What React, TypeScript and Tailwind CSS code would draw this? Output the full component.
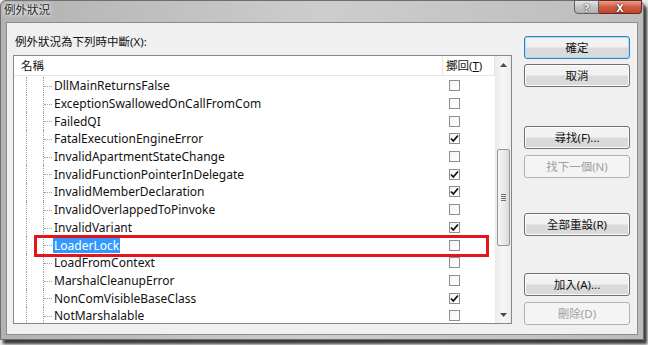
import React from "react";

const rows: [string, boolean][] = [
  ["DllMainReturnsFalse", false],
  ["ExceptionSwallowedOnCallFromCom", false],
  ["FailedQI", false],
  ["FatalExecutionEngineError", true],
  ["InvalidApartmentStateChange", false],
  ["InvalidFunctionPointerInDelegate", true],
  ["InvalidMemberDeclaration", true],
  ["InvalidOverlappedToPinvoke", false],
  ["InvalidVariant", true],
  ["LoaderLock", false],
  ["LoadFromContext", false],
  ["MarshalCleanupError", false],
  ["NonComVisibleBaseClass", true],
  ["NotMarshalable", false],
];

const FONT = { fontFamily: '"Noto Sans", "Noto Sans CJK TC", sans-serif' };

function CheckBox({ checked }: { checked: boolean }) {
  return (
    <div className="w-[11px] h-[11px] border border-[#8e8f8f] bg-gradient-to-br from-[#f4f4f4] to-white flex items-center justify-center">
      {checked && (
        <svg width="9" height="9" viewBox="0 0 9 9">
          <path d="M1 4.5 L3.3 7 L8 1.5" stroke="#111" strokeWidth="1.8" fill="none" />
        </svg>
      )}
    </div>
  );
}

function Btn({
  label,
  disabled,
  isDefault,
  className,
}: {
  label: string;
  disabled?: boolean;
  isDefault?: boolean;
  className?: string;
}) {
  const base =
    "w-[106px] h-[23px] rounded-[3px] flex items-center justify-center text-[11.5px] leading-none";
  let cls = "";
  if (disabled) {
    cls = "border border-[#adb2b5] bg-[#f4f4f4] text-[#a0a0a0]";
  } else if (isDefault) {
    cls =
      "border border-[#3c7fb1] bg-gradient-to-b from-[#f2f2f2] from-45% to-[#dadada] to-55% text-[#111] shadow-[inset_0_0_0_1px_#9ee0ff]";
  } else {
    cls =
      "border border-[#707070] bg-gradient-to-b from-[#f2f2f2] from-45% to-[#dadada] to-55% text-[#111] shadow-[inset_0_0_0_1px_#fcfcfc]";
  }
  return <div className={`${base} ${cls} ${className ?? ""}`}>{label}</div>;
}

function Row({ name, checked, selected }: { name: string; checked: boolean; selected?: boolean }) {
  return (
    <div className="h-[17.7px] flex items-stretch">
      <div className="w-[429px] flex items-center">
        <div className="relative w-[39px] self-stretch shrink-0">
          <div className="absolute left-[12px] top-0 bottom-0 border-l border-dotted border-[#a0a0a0]" />
          <div className="absolute left-[29px] top-0 bottom-0 border-l border-dotted border-[#a0a0a0]" />
          <div className="absolute left-[30px] top-[9px] w-[8px] border-t border-dotted border-[#a0a0a0]" />
        </div>
        <span
          className={`px-[1px] text-[12px] leading-[15px] whitespace-nowrap ${
            selected ? "bg-[#3399ff] text-white" : "text-[#111]"
          }`}
        >
          {name}
        </span>
      </div>
      <div className="flex-1 flex items-center pl-[6px]">
        <CheckBox checked={checked} />
      </div>
    </div>
  );
}

function ScrollBar() {
  return (
    <div className="w-[16px] flex flex-col bg-gradient-to-r from-[#ececec] via-[#f7f7f7] to-[#ececec] border-l border-[#ebebeb]">
      <div className="h-[17px] flex items-center justify-center">
        <svg width="7" height="4" viewBox="0 0 7 4">
          <path d="M0 4 L3.5 0 L7 4 Z" fill="#4a4a4a" />
        </svg>
      </div>
      <div className="flex-1 relative">
        <div className="mt-[76px] mx-[1px] h-[97px] rounded-[2px] border border-[#979797] bg-gradient-to-r from-[#f5f5f5] via-[#ebebeb] to-[#d9d9d9] flex flex-col items-center justify-center gap-[1px]">
          <div className="w-[5px] h-[1px] bg-[#707070]" />
          <div className="w-[5px] h-[1px] bg-[#707070]" />
          <div className="w-[5px] h-[1px] bg-[#707070]" />
          <div className="w-[5px] h-[1px] bg-[#707070]" />
        </div>
      </div>
      <div className="h-[17px] flex items-center justify-center">
        <svg width="7" height="4" viewBox="0 0 7 4">
          <path d="M0 0 L7 0 L3.5 4 Z" fill="#4a4a4a" />
        </svg>
      </div>
    </div>
  );
}

export default function App() {
  return (
    <div className="w-[648px] h-[345px] bg-[#e8e8e8] overflow-hidden" style={FONT}>
      <div className="w-[644px] h-[340px] flex flex-col rounded-t-[6px] border border-[#6e6e6e] bg-gradient-to-r from-[#b2b2b2] via-[#cdcdcd] to-[#bcbcbc] shadow-[3px_4px_3px_rgba(0,0,0,0.75)]">
        {/* title bar */}
        <div className="h-[21px] flex items-start justify-between">
          <div
            className="pl-[3px] pt-[1px] text-[11.5px] leading-[16px] text-[#2a2a2a]"
            style={{ textShadow: "0 0 6px #ffffff, 0 0 3px #ffffff" }}
          >
            例外狀況
          </div>
          <div className="flex mr-[1px] -mt-[1px]">
            <div className="w-[25px] h-[14px] rounded-bl-[4px] border border-[#5f5f5f] bg-gradient-to-b from-[#e6e6e6] via-[#c4c4c4] to-[#b0b0b0] flex items-center justify-center">
              <span
                className="text-[11px] font-bold leading-none text-white"
                style={{ textShadow: "0 0 2px #333, 0 0 1px #333" }}
              >
                ?
              </span>
            </div>
            <div className="w-[43px] h-[14px] rounded-br-[4px] border border-l-0 border-[#5f2a22] bg-gradient-to-b from-[#e9a08f] via-[#d05a43] to-[#c5432b] flex items-center justify-center">
              <span
                className="text-[11px] font-bold leading-none text-white"
                style={{ textShadow: "0 0 2px #3a0f08, 0 0 1px #3a0f08" }}
              >
                X
              </span>
            </div>
          </div>
        </div>
        {/* client */}
        <div className="flex-1 mx-[5px] mb-[4px] border border-[#8c8c8c] bg-[#f0f0f0] flex pl-[6px] pr-[7px]">
          <div className="w-[500px] flex flex-col pt-[11px]">
            <div className="pl-[2px] h-[16px] text-[11.5px] leading-[16px] text-[#111]">
              例外狀況為下列時中斷(X):
            </div>
            <div className="relative mt-[5px] h-[269px] border border-[#828790] bg-white flex overflow-hidden">
              <div className="flex-1 flex flex-col overflow-hidden">
                <div className="h-[20px] shrink-0 flex border-b border-[#e5e5e5] text-[11.5px] text-[#111]">
                  <div className="w-[429px] border-r border-[#e5e5e5] flex items-center pl-[7px]">名稱</div>
                  <div className="flex-1 border-r border-[#e5e5e5] flex items-center pl-[3px]">
                    擲回(<span className="underline">T</span>)
                  </div>
                </div>
                <div className="pt-[1px]">
                  {rows.map(([n, c]) => (
                    <Row key={n} name={n} checked={c} selected={n === "LoaderLock"} />
                  ))}
                </div>
              </div>
              <ScrollBar />
              <div className="absolute left-[20px] top-[179px] w-[455px] h-[22px] border-[3px] border-[#e3151b]" />
            </div>
          </div>
          <div className="ml-[12px] flex flex-col pt-[13px]">
            <Btn label="確定" isDefault />
            <Btn label="取消" className="mt-[5px]" />
            <Btn label="尋找(F)..." className="mt-[39px]" />
            <Btn label="找下一個(N)" disabled className="mt-[6px]" />
            <Btn label="全部重設(R)" className="mt-[35px]" />
            <Btn label="加入(A)..." className="mt-[37px]" />
            <Btn label="刪除(D)" disabled className="mt-[6px]" />
          </div>
        </div>
      </div>
    </div>
  );
}
